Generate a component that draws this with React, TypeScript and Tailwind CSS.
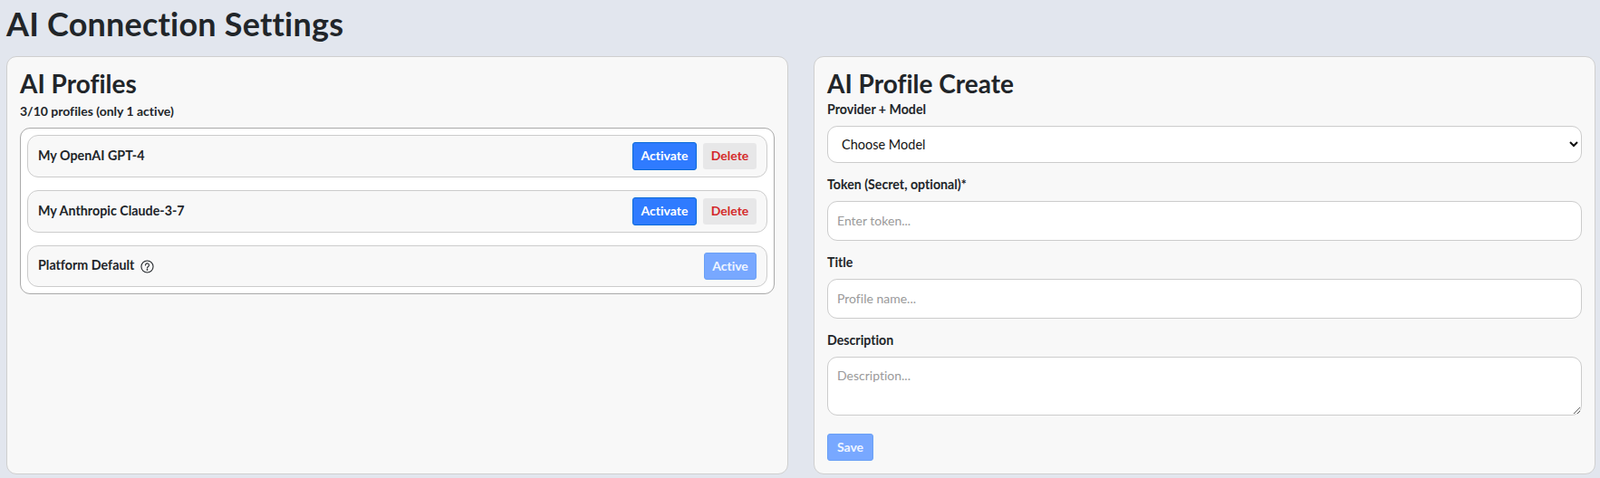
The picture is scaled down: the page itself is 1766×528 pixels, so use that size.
import React from "react";

function Row({ name, active, help }: { name: string; active?: boolean; help?: boolean }) {
  return (
    <div className={(active ? "h-[46px] " : "h-[47px] ") + "flex items-center justify-between rounded-[12px] border border-[#cccccc] bg-[#f8f8f8] pl-[11px] pr-[11px]"}>
      <div className="flex items-center gap-[7px] text-[14.3px] font-bold text-[#212529]">
        <span className="pb-[2px]">{name}</span>
        {help && (
          <svg width="15" height="15" viewBox="0 0 16 16" fill="none" stroke="#212529" strokeWidth="1.15" strokeLinecap="round">
            <circle cx="8" cy="8" r="7" />
            <path d="M5.9 6.3a2.1 2.1 0 1 1 3.3 1.7c-.7.5-1.2.9-1.2 1.7" />
            <circle cx="8" cy="11.6" r=".35" fill="#212529" />
          </svg>
        )}
      </div>
      {active ? (
        <button className="h-[30px] w-[58px] rounded-[3px] border border-[#6aa0f5] bg-[#78a8ff] pb-[2px] text-[14px] font-bold text-[#eef4ff]">Active</button>
      ) : (
        <div className="flex items-center gap-[7px]">
          <button className="h-[31px] w-[71px] rounded-[3px] border border-[#0a6ad8] bg-[#2f7bff] pb-[2px] text-[14px] font-bold text-white">Activate</button>
          <button className="h-[29px] w-[59px] rounded-[3px] bg-[#e7e7e8] pb-[2px] text-[14px] font-bold text-[#d42a2a]">Delete</button>
        </div>
      )}
    </div>
  );
}

function Label({ children, className }: { children: React.ReactNode; className?: string }) {
  return <label className={"block text-[14.2px] font-bold leading-[17px] text-[#212529] " + (className ?? "")}>{children}</label>;
}

export default function App() {
  return (
    <div className="h-[528px] overflow-hidden bg-[#e2e6ee] px-[7px] font-['Lato',sans-serif] text-[#212529] [font-variant-ligatures:none]">
      <h1 className="pt-[4px] text-[36px] font-bold leading-[44px] tracking-[0.2px] text-[#212529]">AI Connection Settings</h1>
      <div className="mt-[14px] grid h-[462px] w-[1754px] grid-cols-2 gap-[28px]">
        <section className="rounded-[11px] border border-[#cfcfcf] bg-[#f8f8f8] px-[14px] pt-[12px]">
          <h2 className="text-[28px] font-bold leading-[34px]">AI Profiles</h2>
          <p className="mt-[5px] text-[14px] font-bold leading-[17px]">3/10 profiles (only 1 active)</p>
          <div className="mt-[10px] flex flex-col gap-[14px] rounded-[11px] border border-[#aaaaaa] bg-white p-[7px]">
            <Row name="My OpenAI GPT-4" />
            <Row name="My Anthropic Claude-3-7" />
            <Row name="Platform Default" active help />
          </div>
        </section>
        <section className="rounded-[11px] border border-[#cfcfcf] bg-[#f8f8f8] px-[14px] pt-[12px]">
          <h2 className="text-[28px] font-bold leading-[34px]">AI Profile Create</h2>
          <Label className="mt-[3px]">Provider + Model</Label>
          <select className="mt-[10px] block h-[41px] w-full rounded-[11px] border border-[#cccccc] bg-white pl-[11px] pr-[3px] text-[14.5px] text-[#111]">
            <option>Choose Model</option>
          </select>
          <Label className="mt-[15px]">Token (Secret, optional)*</Label>
          <input placeholder="Enter token..." className="mt-[10px] block h-[44px] w-full rounded-[11px] border border-[#cccccc] bg-white px-[10px] pb-[2px] text-[14px] placeholder:text-[#9a9a9a]" />
          <Label className="mt-[15px]">Title</Label>
          <input placeholder="Profile name..." className="mt-[10px] block h-[44px] w-full rounded-[11px] border border-[#cccccc] bg-white px-[10px] pb-[2px] text-[14px] placeholder:text-[#9a9a9a]" />
          <Label className="mt-[15px]">Description</Label>
          <textarea placeholder="Description..." className="mt-[10px] block h-[65px] w-full rounded-[11px] border border-[#cccccc] bg-white px-[10px] py-[9px] text-[14px] placeholder:text-[#9a9a9a]" />
          <button className="mt-[20px] block h-[30px] w-[51px] rounded-[3px] border border-[#6aa0f5] bg-[#78a8ff] pb-[2px] text-[14px] font-bold text-[#eef4ff]">Save</button>
        </section>
      </div>
    </div>
  );
}
